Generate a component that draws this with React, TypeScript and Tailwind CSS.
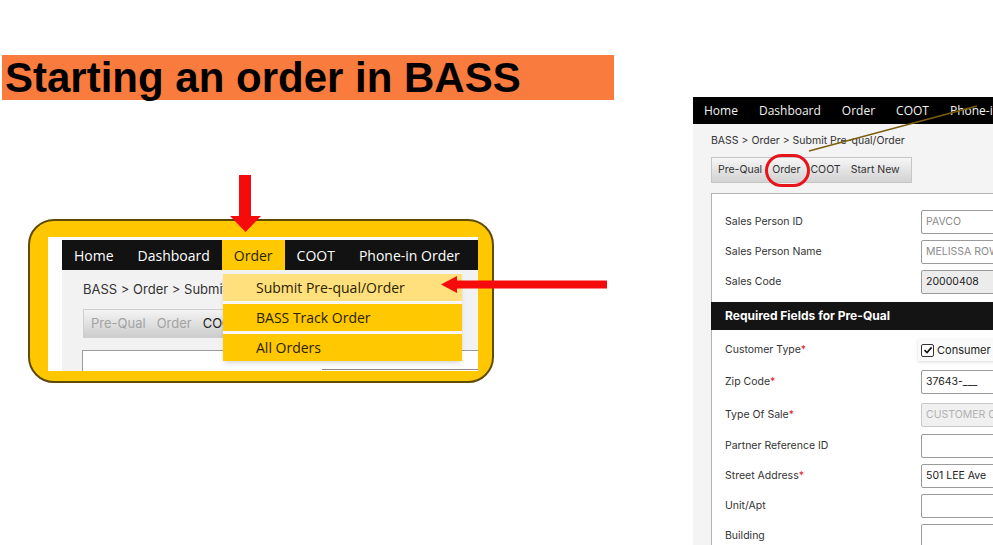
import React from "react";

const leftNav = ["Home", "Dashboard", "Order", "COOT", "Phone-in Order"];
const rightNav = ["Home", "Dashboard", "Order", "COOT", "Phone-in Order"];
const menu = ["Submit Pre-qual/Order", "BASS Track Order", "All Orders"];

const poppins = { fontFamily: '"Open Sans", "Noto Sans", sans-serif' };

function Field({
  label,
  req,
  value,
  tone = "plain",
  h = "h-[30px]",
}: {
  label: string;
  req?: boolean;
  value?: string;
  tone?: "plain" | "muted" | "disabled" | "locked";
  h?: string;
}) {
  const box =
    tone === "locked"
      ? "bg-[#ececec] text-[#222]"
      : tone === "disabled"
      ? "bg-[#f0f0f0] text-[#b0b0b0] border-[#c8c8c8]"
      : tone === "muted"
      ? "bg-white text-[#8a8a8a]"
      : "bg-white text-[#222]";
  return (
    <div className={`flex items-center pl-[13px] ${h}`}>
      <div className="w-[196px] shrink-0 text-[10.5px] text-[#333]">
        {label}
        {req && <span className="text-[#e0202a]">*</span>}
      </div>
      <div
        className={`h-[24px] w-[160px] shrink-0 border border-[#9a9a9a] rounded-[2px] px-[4px] flex items-center text-[10.5px] whitespace-nowrap overflow-hidden ${box}`}
      >
        {value}
      </div>
    </div>
  );
}

function LeftShot() {
  return (
    <div className="ml-[28px] w-[466px] h-[164px] rounded-[26px] border-2 border-[#5f4b00] bg-[#ffc700] pl-[18px] pr-[14px] pt-[16px] pb-[10px]">
      <div className="relative w-[430px] h-[134px] bg-white overflow-hidden pl-[14px] pt-[3px] flex flex-col">
        <div className="h-[30px] bg-[#121212] flex items-stretch text-[14px] font-medium shrink-0" style={poppins}>
          {leftNav.map((n) =>
            n === "Order" ? (
              <div key={n} className="px-[12px] bg-[#ffc800] text-[#2a2200] flex items-center">
                {n}
              </div>
            ) : (
              <div key={n} className="px-3 text-white flex items-center whitespace-nowrap">
                {n}
              </div>
            )
          )}
        </div>
        <div className="flex-1 bg-[#f2f2f2] pl-[21px] pt-[10px] font-['Inter',sans-serif]">
          <div className="text-[13px] leading-[18px] text-[#333] whitespace-nowrap">
            BASS &gt; Order &gt; Submit Pre-qual/Order
          </div>
          <div className="mt-[11px] h-[29px] w-[220px] border border-[#cfcfcf] bg-gradient-to-b from-[#f4f4f4] to-[#cdcdcd] flex items-center pl-[7px] gap-[11px] text-[13px]">
            <span className="text-[#a3a3a3]">Pre-Qual</span>
            <span className="text-[#a3a3a3]">Order</span>
            <span className="text-[#222]">COOT</span>
          </div>
          <div className="mt-[12px] -ml-[1px] h-[40px] w-[420px] border border-[#9a9a9a] bg-white pt-[18px] pl-[239px]">
            <div className="w-[200px] h-[10px] border-t border-[#8a8a8a]" />
          </div>
        </div>
        <div className="absolute left-[175px] top-[37px] w-[239px] bg-[#f7f7f7] flex flex-col gap-[3px] shadow-md text-[14px]" style={poppins}>
          {menu.map((m, i) => (
            <div
              key={m}
              className={`h-[27px] pl-[33px] flex items-center text-[#2a2200] ${i === 0 ? "bg-[#ffe07c]" : "bg-[#ffc800]"}`}
            >
              {m}
            </div>
          ))}
        </div>
      </div>
    </div>
  );
}

function RightShot() {
  return (
    <div className="relative w-[300px] h-[448px] overflow-hidden bg-[#f4f4f4] font-['Inter',sans-serif]">
      <div className="h-[27px] bg-black flex items-center pl-[11px] gap-[21px] text-[12px] font-medium text-[#f2f2f2] whitespace-nowrap" style={poppins}>
        {rightNav.map((n) => (
          <span key={n}>{n}</span>
        ))}
      </div>
      <div className="pl-[18px]">
        <div className="mt-[10px] text-[10.5px] leading-[14px] text-[#333] whitespace-nowrap">
          BASS &gt; Order &gt; Submit Pre-qual/Order
        </div>
        <div className="mt-[9px] h-[26px] w-[201px] border border-[#c6c6c6] bg-gradient-to-b from-[#f6f6f6] to-[#d2d2d2] flex items-center pl-[6px] gap-[10px] text-[10.5px] text-[#333]">
          <span>Pre-Qual</span>
          <span>Order</span>
          <span>COOT</span>
          <span>Start New</span>
        </div>
        <div className="mt-[10px] w-[400px] border border-[#b3b3b3] bg-white pt-[13px] pb-[20px]">
          <Field label="Sales Person ID" value="PAVCO" tone="muted" />
          <Field label="Sales Person Name" value="MELISSA ROWE" tone="muted" />
          <Field label="Sales Code" value="20000408" tone="locked" />
          <div className="mt-[5px] -ml-[1px] h-[28px] bg-[#141414] text-white font-bold text-[12px] pl-[14px] flex items-center">
            Required Fields for Pre-Qual
          </div>
          <div className="mt-[4px] h-[32px] flex items-center pl-[13px]">
            <div className="w-[196px] shrink-0 text-[10.5px] text-[#333]">
              Customer Type<span className="text-[#e0202a]">*</span>
            </div>
            <div className="-ml-[3px] pl-[3px] pr-[10px] h-[22px] bg-[#fafafa] shadow-[0_1px_3px_rgba(0,0,0,0.15)] flex items-center gap-[3px] text-[11px] text-[#222]">
              <div className="w-[13px] h-[13px] border border-[#333] rounded-[2px] bg-white flex items-center justify-center">
                <svg width="10" height="10" viewBox="0 0 10 10">
                  <path d="M1.5 5.2 L4 7.6 L8.6 2.4" fill="none" stroke="#111" strokeWidth="1.6" />
                </svg>
              </div>
              Consumer
            </div>
          </div>
          <Field label="Zip Code" req value="37643-___" h="h-[32px]" />
          <Field label="Type Of Sale" req value="CUSTOMER CONNECT" tone="disabled" h="h-[33px]" />
          <Field label="Partner Reference ID" />
          <Field label="Street Address" req value="501 LEE Ave" />
          <Field label="Unit/Apt" />
          <Field label="Building" />
        </div>
      </div>
      {/* callout marks drawn over the screenshot */}
      <div className="absolute left-[72px] top-[57px] w-[45px] h-[33px] rounded-full border-[3px] border-[#e8141c]" />
      <svg className="absolute left-0 top-0" width="300" height="448">
        <line x1="116" y1="54" x2="284" y2="9" stroke="#7c5e0c" strokeWidth="1.4" />
      </svg>
    </div>
  );
}

export default function App() {
  return (
    <div className="w-[993px] h-[545px] bg-white overflow-hidden flex">
      <div className="relative w-[693px] shrink-0 pt-[55px]">
        <div className="ml-[2px] w-[612px] h-[45px] bg-[#f97b3e] flex items-center pl-[3px]">
          <h1 className="font-['Liberation_Sans',Arial,sans-serif] font-bold text-[42px] leading-none text-black whitespace-nowrap">
            Starting an order in BASS
          </h1>
        </div>
        <div className="mt-[119px]">
          <LeftShot />
        </div>
        <svg className="absolute left-[229px] top-[175px]" width="33" height="58" viewBox="0 0 33 58">
          <rect x="10" y="0" width="12" height="42" fill="#f50b0b" />
          <polygon points="1,41 32,41 16.5,57" fill="#f50b0b" />
        </svg>
        <svg className="absolute left-[441px] top-[275px]" width="166" height="19" viewBox="0 0 166 19">
          <polygon points="0,9.5 16,1 16,18" fill="#f50b0b" />
          <rect x="15" y="5.5" width="151" height="8" fill="#f50b0b" />
        </svg>
      </div>
      <div className="flex-1 pt-[97px]">
        <RightShot />
      </div>
    </div>
  );
}
